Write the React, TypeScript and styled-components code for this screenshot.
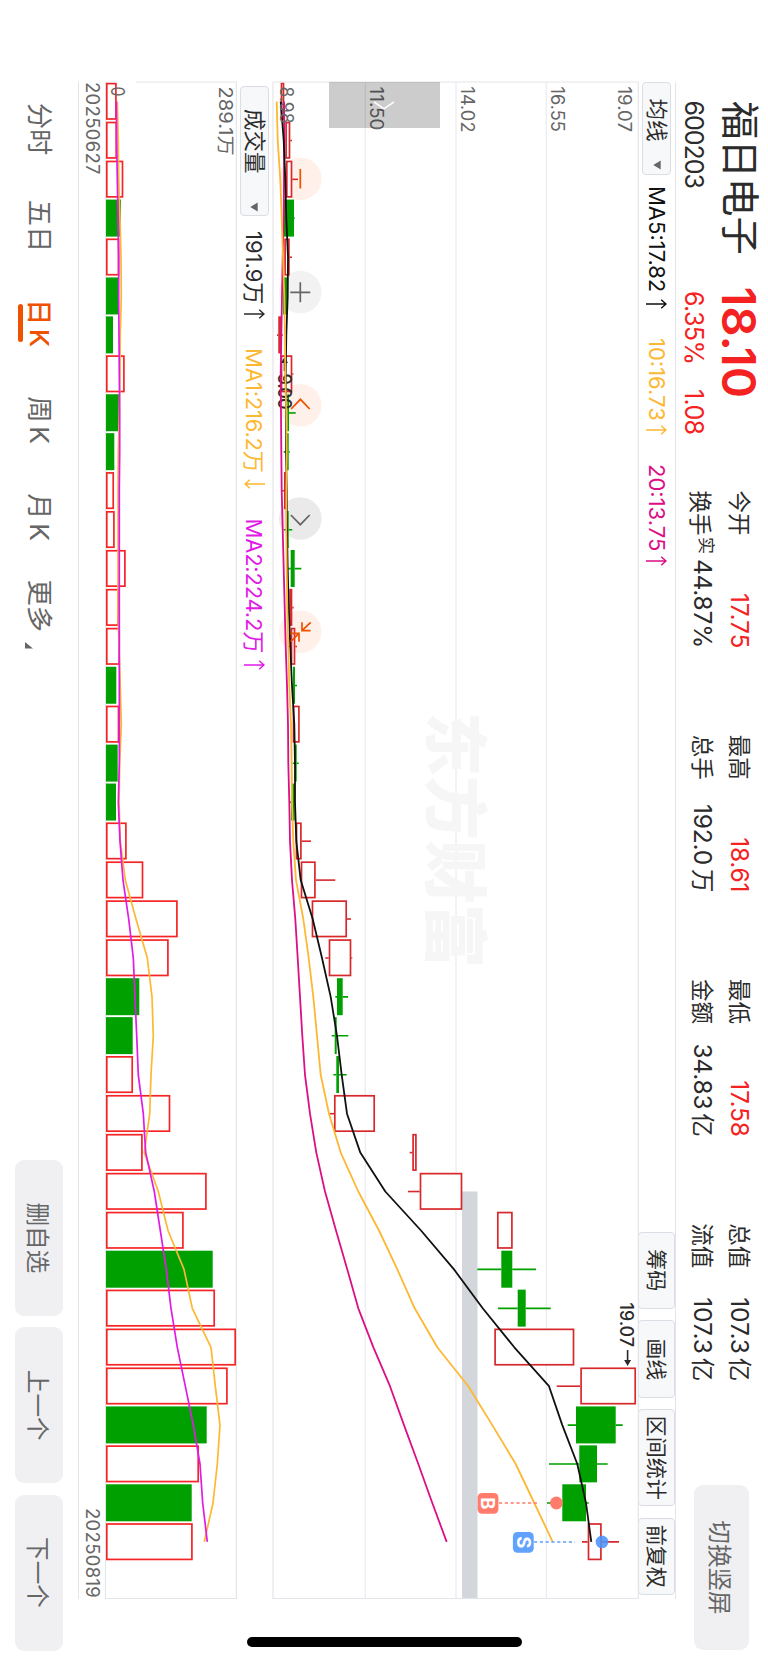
import React from 'react';
import styled, { createGlobalStyle, css } from 'styled-components';

const GlobalStyle = createGlobalStyle`
  html, body { margin: 0; padding: 0; background: #fff; }
  *, *::before, *::after { box-sizing: border-box; }
`;

const C = {
  ink: '#2b2b2b',
  grey: '#666',
  red: '#f52222',
  candleRed: '#d7282b',
  green: '#00a000',
  orange: '#ee5200',
  amber: '#fdb833',
  pink: '#dc0f86',
  magenta: '#e01be6',
  line: '#e4e5ea',
  button: '#f0f0f3',
  chip: '#f7f8fa',
};

/* ---------- landscape stage on a portrait device ---------- */

const Device = styled.main`
  position: relative;
  width: 768px;
  height: 1663px;
  overflow: hidden;
  background: #fff;
`;

const Stage = styled.div`
  display: flex;
  flex-direction: column;
  width: 1663px;
  height: 768px;
  transform-origin: 0 0;
  transform: translateX(768px) rotate(90deg);
  font-family: Inter, 'Noto Sans CJK SC', sans-serif;
  color: ${C.ink};
  white-space: nowrap;
`;

/* ---------- header ---------- */

const Header = styled.header`
  display: flex;
  height: 92px;
  padding-left: 100.5px;
`;

const Identity = styled.div`
  display: grid;
  grid-template-columns: 186px 204px;
  grid-template-rows: 57px 35px;
  align-items: center;
`;

const StockName = styled.h1`
  margin: 0;
  padding-left: 0.5px;
  font-size: 38.4px;
  line-height: 57px;
  font-weight: 400;
  letter-spacing: 0.1px;
`;

const Price = styled.strong`
  font-size: 47px;
  line-height: 57px;
  font-weight: 600;
  letter-spacing: 0.2px;
  color: ${C.red};
`;

const Code = styled.span`
  font-size: 25px;
  line-height: 35px;
  letter-spacing: -1px;
`;

const Change = styled.div`
  display: flex;
  gap: 24.5px;
  padding-left: 4.5px;
  font-size: 25px;
  line-height: 35px;
  letter-spacing: -0.6px;
  color: ${C.red};
`;

const Quotes = styled.div`
  display: grid;
  grid-template-columns: repeat(4, 157.6px);
  grid-template-rows: 37px 37px;
  column-gap: 86.7px;
  padding-top: 9.5px;
`;

const Quote = styled.div`
  display: flex;
  align-items: center;
  justify-content: space-between;
  font-size: 24.5px;
  line-height: 37px;
`;

const QuoteLabel = styled.span<{ $drop?: boolean }>`
  font-size: 22.5px;
  padding-top: ${(p) => (p.$drop ? 4 : 0)}px;
`;

const Mark = styled.sup`
  font-size: 17px;
  line-height: 16px;
  vertical-align: 7.5px;
  margin-left: 1.5px;
`;

const QuoteValue = styled.span<{ $up?: boolean }>`
  letter-spacing: -0.2px;
  color: ${(p) => (p.$up ? C.red : C.ink)};
`;

const Unit = styled.span`
  margin-left: 4px;
  font-size: 23.5px;
`;

const GreyButton = styled.button<{ $w: number; $h: number }>`
  width: ${(p) => p.$w}px;
  height: ${(p) => p.$h}px;
  padding: 0;
  border: 0;
  border-radius: 9px;
  background: ${C.button};
  color: ${C.grey};
  font: inherit;
  font-size: 23.6px;
`;

const HeaderAction = styled.div`
  margin: 19px 13px 0 auto;
`;

/* ---------- indicator rows ---------- */

const IndicatorRow = styled.div<{ $h: number; $ruled?: boolean; $pad?: number }>`
  display: flex;
  align-items: center;
  height: ${(p) => p.$h}px;
  margin-left: 82px;
  width: 1517px;
  padding: ${(p) => (p.$ruled ? 0 : 1.5)}px 0 0 ${(p) => p.$pad ?? 0}px;
  ${(p) => p.$ruled && css`border-top: 1px solid ${C.line};`}
`;

const chip = css`
  border: 1px solid #dcdee5;
  border-radius: 4px;
  background: ${C.chip};
  color: ${C.ink};
  font: inherit;
  padding: 0;
`;

const Picker = styled.button<{ $w: number; $indent: number; $gap: number }>`
  ${chip}
  display: flex;
  align-items: center;
  width: ${(p) => p.$w}px;
  height: 29px;
  padding-left: ${(p) => p.$indent}px;
  gap: ${(p) => p.$gap}px;
  font-size: 21.5px;
  line-height: 27px;
`;

const Readout = styled.span<{ $color: string; $ml: number; $w: number; $track?: number }>`
  display: flex;
  justify-content: space-between;
  align-items: center;
  width: ${(p) => p.$w}px;
  margin-left: ${(p) => p.$ml}px;
  color: ${(p) => p.$color};
  font-size: 22px;
  line-height: 28px;
  letter-spacing: ${(p) => p.$track ?? 0}px;
`;

const Tools = styled.div`
  display: flex;
  gap: 11.3px;
  margin-left: auto;
  margin-right: 4px;
`;

const Tool = styled.button<{ $w: number }>`
  ${chip}
  width: ${(p) => p.$w}px;
  height: 37px;
  font-size: 21px;
  line-height: 35px;
`;

/* ---------- charts ---------- */

const ChartPane = styled.section<{ $h: number }>`
  position: relative;
  height: ${(p) => p.$h}px;
  margin-left: 82px;
  width: 1517px;
  svg { display: block; overflow: visible; }
`;

const DrawerHandle = styled.button`
  position: absolute;
  left: 0;
  top: 199px;
  width: 46px;
  height: 111px;
  padding: 0;
  border: 0;
  background: rgba(0, 0, 0, 0.2);
  display: flex;
  align-items: center;
  justify-content: center;
`;

const Dates = styled.div`
  display: flex;
  justify-content: space-between;
  height: 27px;
  margin-left: 82px;
  width: 1517px;
  padding: 0 1px 0 0;
  border-bottom: 1px solid ${C.line};
  font-size: 18.5px;
  line-height: 24px;
  letter-spacing: 0.3px;
  color: ${C.grey};
`;

/* ---------- footer ---------- */

const Footer = styled.footer`
  display: flex;
  align-items: center;
  height: 78px;
  padding: 0 12.5px 0 80.5px;
`;

const Tabs = styled.nav`
  display: grid;
  grid-template-columns: repeat(6, 97px);
`;

const Tab = styled.a<{ $active?: boolean }>`
  position: relative;
  display: flex;
  justify-content: center;
  font-size: 26.3px;
  line-height: 40px;
  color: ${(p) => (p.$active ? C.orange : C.grey)};
  ${(p) =>
    p.$active &&
    css`
      font-weight: 500;
      &::after {
        content: '';
        position: absolute;
        left: calc(50% - 19px);
        bottom: -1px;
        width: 38px;
        height: 5.5px;
        border-radius: 3px;
        background: ${C.orange};
      }
    `}
`;

const Period = styled.span`
  margin-left: 3.7px;
`;

const MoreCorner = styled.svg`
  align-self: flex-end;
  margin: 0 0 6px 10px;
`;

const Actions = styled.div`
  display: flex;
  gap: 11.3px;
  margin-left: auto;
`;

const HomeIndicator = styled.i`
  position: absolute;
  right: 246.5px;
  bottom: 16px;
  width: 275px;
  height: 9.7px;
  border-radius: 5px;
  background: #000;
`;

/* ---------- data ---------- */

type Candle = [up: 0 | 1, lo: number, hi: number, wickLo: number, wickHi: number, volume: number];

const CANDLES: Candle[] = [
  [1, 280.7, 284.3, 280.7, 284.3, 10.7], [1, 285.3, 290.3, 285.3, 292, 11],
  [1, 286, 292.3, 286, 298, 17.3], [0, 283.7, 294, 283.7, 294.7, 15],
  [1, 284.3, 289.7, 284.3, 292, 13.3], [0, 283, 287, 283, 287, 13],
  [1, 278.3, 281.3, 277, 282.7, 7], [1, 280.7, 292.3, 280.7, 293.5, 18.7],
  [0, 287.3, 289, 287.3, 295.7, 13.3], [0, 287, 288.7, 283.7, 289.7, 8.3],
  [1, 284, 286.3, 282.3, 286.3, 8], [0, 286.7, 288.7, 283.7, 292.3, 8.7],
  [0, 290.7, 294.7, 288.3, 301.3, 19.7], [1, 289.3, 292.3, 289.3, 293.7, 13],
  [1, 290.7, 295.3, 288, 297, 14], [0, 293, 295, 293, 297, 10.3],
  [1, 292.7, 299.7, 292.7, 299.7, 13.3], [0, 295, 296.7, 292.7, 298.7, 11.7],
  [0, 291, 294.7, 289.3, 294.7, 10], [1, 295.7, 301.7, 295.7, 311, 20.7],
  [1, 300.7, 315.7, 300.7, 335.3, 37.3], [1, 311.7, 347, 311.7, 351, 71.7],
  [1, 328.7, 351.3, 325.3, 352.3, 62.7], [0, 337, 342.7, 335.3, 348, 33.3],
  [0, 334.7, 336.7, 331.7, 348.3, 26.7], [0, 336.3, 339, 333.3, 346.7, 27],
  [1, 334, 375, 330, 375, 64.3], [1, 412.3, 416.7, 409.7, 416.7, 36.7],
  [1, 419.7, 462.3, 408, 462.3, 100.7], [1, 497, 512.7, 497, 512.7, 77.7],
  [0, 501.3, 512.3, 477.3, 536, 106.7], [0, 517.7, 525.7, 498, 550.7, 109],
  [1, 494.3, 574.3, 494.3, 574.3, 130], [1, 580.3, 636, 556.7, 636, 121.7],
  [0, 576, 615.7, 567.7, 622.7, 100.7], [0, 579.3, 597, 549, 607.7, 93],
  [0, 562.3, 586, 547, 588.7, 85.7], [1, 587.7, 601.7, 582, 619, 86.7],
];

/* Volume bars are coloured by their own up/down flag. */
const VOLUME_DOWN = new Set([3, 5, 6, 8, 9, 15, 17, 18, 23, 24, 30, 34, 36]);

const MA5 = [280.7, 283.7, 285.3, 286.3, 288, 287.7, 286.3, 285.7, 286, 286, 286.7, 287, 287.7, 288.7, 290.3, 292, 294.3, 295, 295, 296.3, 300.7, 312.7, 322, 330.7, 337, 341.7, 347, 360.3, 385.3, 421, 454, 482.7, 514.3, 549, 562.3, 577.3, 586, 591.3];
const MA10 = [276.7, 277.7, 280.3, 281.7, 283, 284.3, 285, 285.3, 286.3, 286.7, 286.3, 286.3, 286.7, 287.3, 288.3, 289.3, 291, 291.7, 292, 293.3, 296, 303.3, 308.7, 313.3, 317, 320.7, 329, 340.7, 358.3, 379, 397.3, 414.7, 437.3, 468.3, 492.3, 515.7, 534.3, 552.7];
const MA20 = [284, 284.3, 284, 283.7, 282.7, 282, 281.3, 280.7, 281, 281.3, 281.7, 282.7, 283.7, 284.7, 285.7, 287, 288, 288.3, 289.3, 290, 292, 295.3, 297.7, 300, 302.3, 305, 310, 316.3, 325, 336, 347.3, 358.3, 373.4, 390, 404, 418.3, 432.3, 446.7];
const VOL_MA1 = [352, 355, 356, 360, 363, 364, 361, 360, 358, 355, 354, 354, 354, 354, 357, 361, 364, 359, 357, 361, 376, 408, 442, 456, 460, 453, 449, 433, 475, 504, 552, 577, 633, 646, 660, 652, 639, 613];
const VOL_MA2 = [349, 350, 352, 354, 356, 356, 357, 358, 359, 359, 358, 358, 358, 358, 358, 358, 358, 358, 355, 360, 369, 386, 400, 405, 410, 415, 430, 437, 463, 481, 499, 513, 532, 556, 580, 600, 608, 622];

const PITCH = 38.93;
const BAR = 37;
const leftOf = (i: number) => 0.8 + i * PITCH;
const midOf = (i: number) => 19.5 + i * PITCH;
const yPrice = (level: number) => 639 - level;
const yVolume = (level: number) => 237 - level / 3;
const path = (values: number[], y: (v: number) => number) =>
  values.map((v, i) => `${i ? 'L' : 'M'}${midOf(i).toFixed(1)} ${y(v).toFixed(1)}`).join('');

/* ---------- chart pieces ---------- */

const Box = ({ x, y, h, up, red }: { x: number; y: number; h: number; up: boolean; red: string }) =>
  up ? (
    <rect x={x + 0.8} y={y + 0.8} width={BAR - 1.6} height={Math.max(h - 1.6, 0.6)} fill={h > 3.5 ? '#fff' : red} stroke={red} strokeWidth={1.7} />
  ) : (
    <rect x={x} y={y} width={BAR} height={h} fill={C.green} />
  );

const AxisText = ({ x = 4.5, y, w, children }: { x?: number; y: number; w: number; children: string }) => (
  <text x={x} y={y} fontSize={18} fill={C.grey} textLength={w} lengthAdjust="spacingAndGlyphs">
    {children}
  </text>
);

const FLOATING = [97.3, 210.6, 323.8, 437, 550.2];

const PriceChart = () => (
  <svg width={1517} height={366} viewBox="0 0 1517 366">
    <g stroke={C.line} strokeWidth={1.2} fill="none">
      <path d="M0 .7H1516.5V366M0 .7V366M0 366H1516.5" />
      <path d="M0 92.7H1516M0 183H1516M0 273.7H1516" stroke="#e9ebf2" />
    </g>
    <text x={630} y={207} fontSize={64} fontWeight={900} fill="#f6f6f6" textLength={256}>
      东方财富
    </text>
    <rect x={1109.5} y={161.5} width={406.5} height={15.5} fill="#d3d6db" />
    {FLOATING.map((x, i) => (
      <circle key={x} cx={x - 0.5} cy={338.7} r={21.3} fill={['#fff0e9', '#f2f2f2', '#fff0e9', '#eaeaea', '#fff0e9'][i]} />
    ))}
    {CANDLES.map(([up, lo, hi, wickLo, wickHi], i) => (
      <g key={i}>
        <path
          d={`M${midOf(i)} ${yPrice(wickLo)}V${yPrice(lo)}M${midOf(i)} ${yPrice(hi)}V${yPrice(wickHi)}`}
          stroke={up ? C.candleRed : C.green}
          strokeWidth={1.6}
        />
        <Box x={leftOf(i)} y={yPrice(hi)} h={hi - lo} up={!!up} red={C.candleRed} />
      </g>
    ))}
    <g fill={C.ink} stroke="none">
      <path d="M275 354.5l6-3.5v2.7h8v1.6h-8v2.7z" />
      <text x={291.5} y={360.8} fontSize={18} textLength={36} fontWeight={500}>9.00</text>
      <text x={1220.5} y={19.2} fontSize={18} textLength={44.5} fontWeight={500} lengthAdjust="spacingAndGlyphs">19.07</text>
      <path d="M1284 11.4l-6-3.5v2.7h-10v1.6h10v2.7z" />
    </g>
    <g fill="none" strokeWidth={1.8} strokeLinejoin="round">
      <path d={path(MA20, yPrice)} stroke={C.pink} />
      <path d={path(MA5, yPrice)} stroke="#111" />
      <path d={path(MA10, yPrice)} stroke={C.amber} />
    </g>
    <AxisText y={20.7} w={45.5}>19.07</AxisText>
    <AxisText y={88} w={45.5}>16.55</AxisText>
    <AxisText y={178} w={46}>14.02</AxisText>
    <AxisText y={268.6} w={44}>11.50</AxisText>
    <AxisText y={358.8} w={37}>8.98</AxisText>
    <g fill="none" strokeWidth={1.7}>
      <path d="M87 338.7h19.5" stroke={C.orange} />
      <path d="M200.3 338.7h20M210.3 328.7v20" stroke={C.grey} />
      <path d="M327 329.3l-9.7 9.3 9.7 9.3" stroke={C.orange} />
      <path d="M433 329.3l9.7 9.4-9.7 9.4" stroke={C.grey} />
      <path d="M540.3 328.3l8.4 8.7M540.3 337h8.4v-8.6M559.7 348.3l-8.4-8.3M559.7 340h-8.4v8.3" stroke={C.orange} />
    </g>
    <g strokeWidth={1.5} fill="none" strokeDasharray="3.2 2.6">
      <path d={`M${midOf(36)} 140V100`} stroke="#ff7b6b" />
      <path d={`M${midOf(37)} 105V64`} stroke="#62a1fc" />
    </g>
    <circle cx={midOf(36)} cy={82.6} r={6.4} fill="#ff7b6b" />
    <circle cx={midOf(37)} cy={37} r={6.4} fill="#4b93fb" fillOpacity={0.88} />
    <g fontSize={18.5} fontWeight={700} textAnchor="middle">
      <rect x={1411} y={140.6} width={20.8} height={20.8} rx={4.5} fill="#ff7b6b" />
      <text x={1421.3} y={157.7} fill="#fff">B</text>
      <rect x={1450} y={105.3} width={20.8} height={20.8} rx={4.5} fill="#62a1fc" />
      <text x={1460.4} y={122.4} fill="#fff">S</text>
    </g>
  </svg>
);

const VolumeChart = () => (
  <svg width={1517} height={131} viewBox="0 0 1517 131">
    <path d="M0 .6H1516.5V131.5H0M0 .6V101" stroke={C.line} strokeWidth={1.2} fill="none" />
    {CANDLES.map((c, i) => (
      <Box key={i} x={leftOf(i)} y={131 - c[5]} h={c[5]} up={!VOLUME_DOWN.has(i)} red="#f52525" />
    ))}
    <g fill="none" strokeWidth={1.7} strokeLinejoin="round">
      <path d={path(VOL_MA1, yVolume)} stroke={C.amber} />
      <path d={path(VOL_MA2, yVolume)} stroke={C.magenta} />
    </g>
    <AxisText y={18.4} w={69}>289.1万</AxisText>
    <AxisText y={126.3} w={10}>0</AxisText>
  </svg>
);

const Caret = () => (
  <svg width={10} height={8} viewBox="0 0 10 8">
    <path d="M.6.3h8.8L5 7.7z" fill="#666" />
  </svg>
);

const Trend = ({ down }: { down?: boolean }) => (
  <svg width={10} height={21} viewBox="0 0 10 21" fill="none" stroke="currentColor" strokeWidth={1.5}>
    <path d={down ? 'M5 0v20M.7 15.2L5 20l4.3-4.8' : 'M5 21V1M.7 5.8L5 1l4.3 4.8'} />
  </svg>
);

/* ---------- page ---------- */

const QUOTES: { label: string; value: string; unit?: string; up?: boolean; mark?: string }[] = [
  { label: '今开', value: '17.75', up: true },
  { label: '最高', value: '18.61', up: true },
  { label: '最低', value: '17.58', up: true },
  { label: '总值', value: '107.3', unit: '亿' },
  { label: '换手', value: '44.87%', mark: '实' },
  { label: '总手', value: '192.0', unit: '万' },
  { label: '金额', value: '34.83', unit: '亿' },
  { label: '流值', value: '107.3', unit: '亿' },
];

const TOOLS: [string, number][] = [['筹码', 77.5], ['画线', 77.5], ['区间统计', 97], ['前复权', 77.5]];

export default function App() {
  return (
    <Device>
      <GlobalStyle />
      <Stage>
        <Header>
          <Identity>
            <StockName>福日电子</StockName>
            <Price>18.10</Price>
            <Code>600203</Code>
            <Change>
              <span>6.35%</span>
              <span>1.08</span>
            </Change>
          </Identity>
          <Quotes>
            {QUOTES.map((q) => (
              <Quote key={q.label}>
                <QuoteLabel $drop={!!q.mark}>
                  {q.label}
                  {q.mark && <Mark>{q.mark}</Mark>}
                </QuoteLabel>
                <QuoteValue $up={q.up}>
                  {q.value}
                  {q.unit && <Unit>{q.unit}</Unit>}
                </QuoteValue>
              </Quote>
            ))}
          </Quotes>
          <HeaderAction>
            <GreyButton $w={165} $h={55}>切换竖屏</GreyButton>
          </HeaderAction>
        </Header>

        <IndicatorRow $h={37} $ruled>
          <Picker $w={93} $indent={15.5} $gap={18}>
            均线
            <Caret />
          </Picker>
          <Readout $color="#111" $ml={11} $w={123}>MA5:17.82<Trend /></Readout>
          <Readout $color={C.amber} $ml={29} $w={97}>10:16.73<Trend /></Readout>
          <Readout $color={C.pink} $ml={29} $w={102}>20:13.75<Trend /></Readout>
          <Tools>
            {TOOLS.map(([label, w]) => (
              <Tool key={label} $w={w}>{label}</Tool>
            ))}
          </Tools>
        </IndicatorRow>

        <ChartPane $h={366}>
          <PriceChart />
          <DrawerHandle aria-label="展开">
            <svg width={9} height={22} viewBox="0 0 9 22" fill="none" stroke="#fff" strokeWidth={1.6}>
              <path d="M.8 1l7 10-7 10" />
            </svg>
          </DrawerHandle>
        </ChartPane>

        <IndicatorRow $h={36} $pad={4}>
          <Picker $w={130} $indent={22} $gap={28}>
            成交量
            <Caret />
          </Picker>
          <Readout $color={C.ink} $ml={15} $w={88}>191.9万<Trend /></Readout>
          <Readout $color={C.amber} $ml={29} $w={140.5} $track={-0.2}>MA1:216.2万<Trend down /></Readout>
          <Readout $color={C.magenta} $ml={30} $w={151} $track={-0.2}>MA2:224.2万<Trend /></Readout>
        </IndicatorRow>

        <ChartPane $h={132}>
          <VolumeChart />
        </ChartPane>

        <Dates>
          <span>20250627</span>
          <span>20250819</span>
        </Dates>

        <Footer>
          <Tabs>
            <Tab>分时</Tab>
            <Tab>五日</Tab>
            <Tab $active>日<Period>K</Period></Tab>
            <Tab>周<Period>K</Period></Tab>
            <Tab>月<Period>K</Period></Tab>
            <Tab>
              更多
              <MoreCorner width={6.5} height={8} viewBox="0 0 6.5 8">
                <path d="M6.5 0v8H0z" fill="#666" />
              </MoreCorner>
            </Tab>
          </Tabs>
          <Actions>
            <GreyButton $w={156} $h={48}>删自选</GreyButton>
            <GreyButton $w={156} $h={48}>上一个</GreyButton>
            <GreyButton $w={156} $h={48}>下一个</GreyButton>
          </Actions>
        </Footer>
      </Stage>
      <HomeIndicator />
    </Device>
  );
}
